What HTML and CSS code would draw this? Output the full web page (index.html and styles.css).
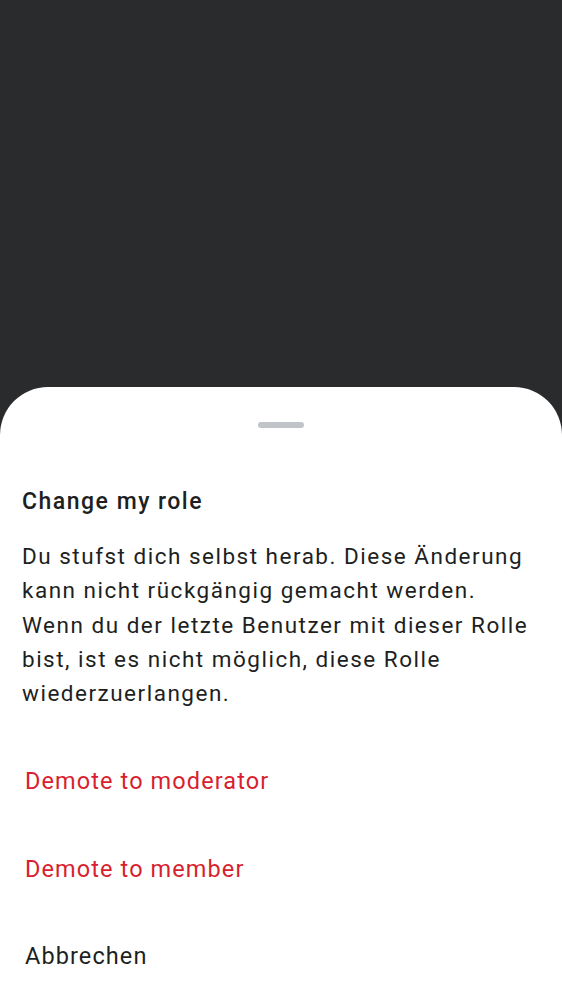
FILE: index.html
```html
<!DOCTYPE html>
<html>
<head>
<meta charset="utf-8">
<link rel="stylesheet" href="styles.css">
</head>
<body>
<div class="backdrop"></div>
<div class="sheet">
  <div class="handle"></div>
  <h1 class="title">Change my role</h1>
  <p class="message">Du stufst dich selbst herab. Diese Änderung kann nicht rückgängig gemacht werden. Wenn du der letzte Benutzer mit dieser Rolle bist, ist es nicht möglich, diese Rolle wiederzuerlangen.</p>
  <div class="actions">
    <div class="action danger">Demote to moderator</div>
    <div class="action danger">Demote to member</div>
    <div class="action">Abbrechen</div>
  </div>
</div>
</body>
</html>
```

FILE: styles.css
```css
html, body {
  margin: 0;
  padding: 0;
  height: 1000px;
  overflow: hidden;
  background: #2a2b2d;
  font-family: Roboto, "Noto Sans", sans-serif;
}
.backdrop {
  height: 387px;
}
.sheet {
  background: #ffffff;
  border-radius: 48px 48px 0 0;
  height: 613px;
  display: flex;
  flex-direction: column;
  box-sizing: border-box;
  padding: 35px 0 0 0;
}
.handle {
  align-self: center;
  width: 46px;
  height: 6px;
  border-radius: 3px;
  background: #c1c4c9;
}
.title {
  margin: 59px 22px 0 22px;
  font-family: "Roboto Medium", Roboto, "Noto Sans", sans-serif;
  font-size: 23px;
  font-weight: 500;
  line-height: 30px;
  letter-spacing: 1.5px;
  color: #1e1f22;
}
.message {
  margin: 22px 22px 0 22px;
  font-size: 22.5px;
  line-height: 34.3px;
  letter-spacing: 1.5px;
  color: #1e1f22;
}
.actions {
  display: flex;
  flex-direction: column;
  margin-top: 27px;
}
.action {
  padding: 0 25px;
  height: 87.5px;
  display: flex;
  align-items: center;
  font-size: 23.5px;
  letter-spacing: 1.1px;
  color: #1e1f22;
}
.action.danger {
  color: #d81f2e;
}
```
